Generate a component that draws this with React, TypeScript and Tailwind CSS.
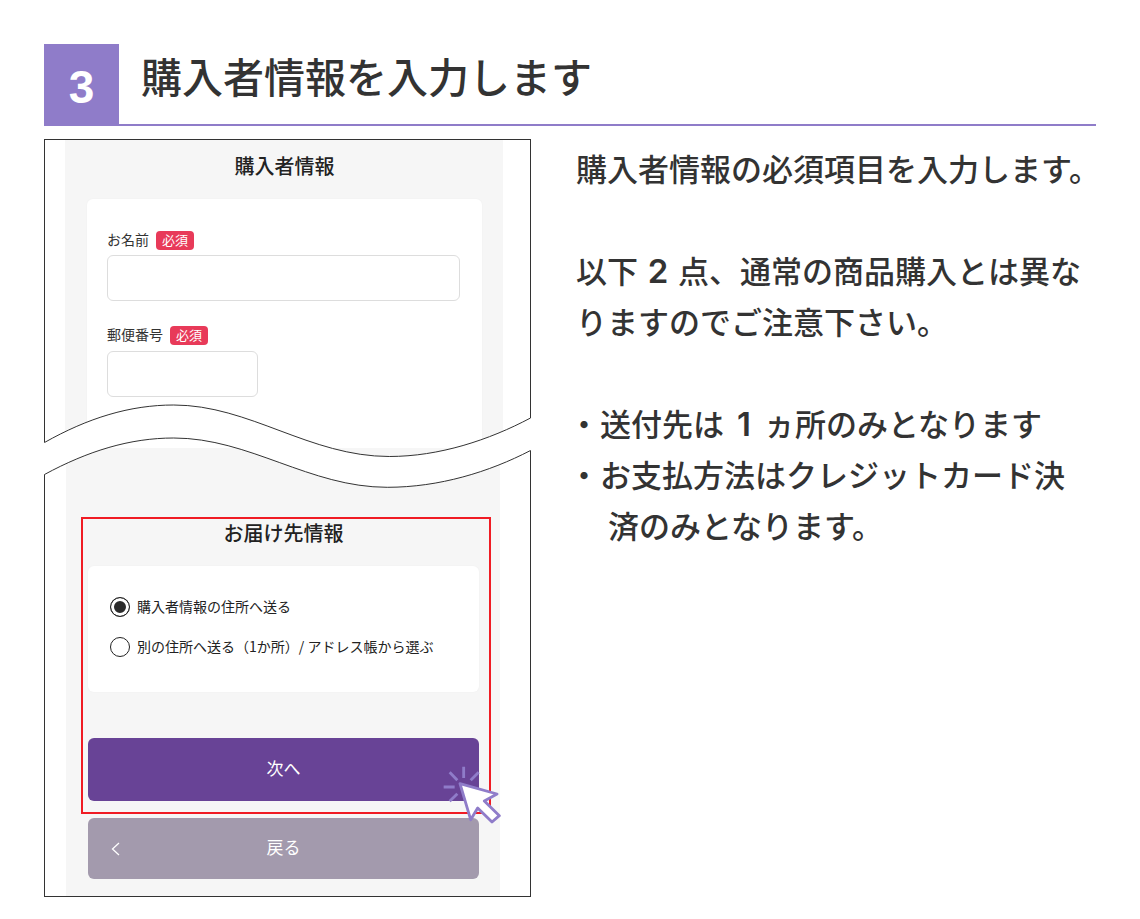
import { useState } from "react";
import type { ReactNode } from "react";

function RequiredLabel({ htmlFor, children }: { htmlFor: string; children: ReactNode }) {
  return (
    <label htmlFor={htmlFor} className="flex items-start gap-[7px] text-[14px] leading-[16px] text-[#333]">
      {children}
      <span className="rounded-[4px] bg-[#e83a59] px-[6px] pb-[2px] text-[13px] leading-[17px] text-white">必須</span>
    </label>
  );
}

function ShippingOption({
  value,
  selected,
  onSelect,
  children,
}: {
  value: string;
  selected: string;
  onSelect: (value: string) => void;
  children: ReactNode;
}) {
  return (
    <label className="flex items-center gap-[7px] text-[14px] leading-[18px] whitespace-nowrap text-[#222]">
      <input
        type="radio"
        name="shipping"
        value={value}
        checked={selected === value}
        onChange={() => onSelect(value)}
        className="size-[20px] shrink-0 appearance-none rounded-full border border-[#222] bg-white checked:bg-[#2b2b2b] checked:shadow-[inset_0_0_0_3px_#fff]"
      />
      <span className="pb-[2px]">{children}</span>
    </label>
  );
}

function TornWave() {
  return (
    <svg
      aria-hidden="true"
      viewBox="44 400 488 92"
      preserveAspectRatio="none"
      className="absolute top-[260px] -left-px h-[92px] w-[calc(100%+2px)]"
    >
      <path
        d="M43 442.5H44.5C88 418 130 405 174 405C250 405 310 456.5 390 456.5C440 456.5 490 440 531.5 418H533V450.5H531.5C490 472 440 487.3 388 487.3C310 487.3 250 438 174 438C130 438 88 451 44.5 474.5H43Z"
        fill="#fff"
      />
      <path
        d="M44.5 442.5C88 418 130 405 174 405C250 405 310 456.5 390 456.5C440 456.5 490 440 531.5 418M44.5 474.5C88 451 130 438 174 438C250 438 310 487.3 388 487.3C440 487.3 490 472 531.5 450.5"
        fill="none"
        stroke="#333"
        vectorEffect="non-scaling-stroke"
      />
    </svg>
  );
}

function ClickCursor() {
  return (
    <svg
      aria-hidden="true"
      viewBox="129 138 174 174"
      className="pointer-events-none absolute -right-[12px] -bottom-[12px] z-10 size-[58px]"
      stroke="#8f7cc9"
      strokeWidth="8.5"
      strokeLinejoin="round"
    >
      <path d="M191 140V174M149 157L172 181M131 201H164M236 157L212 181M172 221L149 244" fill="none" />
      <path d="M180 191L291 222L253 243L298 287L276 306L233 264L212 299Z" fill="#fff" />
    </svg>
  );
}

function Numeral({ children }: { children: ReactNode }) {
  return (
    <span className="mx-[9px] inline-block w-[22px] text-center font-['Inter','Liberation_Sans',sans-serif] text-[33px] leading-none font-semibold">
      {children}
    </span>
  );
}

function Bullet({ children }: { children: ReactNode }) {
  return (
    <li className="flex gap-[8px]">
      <span className="flex w-[16px] shrink-0 justify-center">・</span>
      <span>{children}</span>
    </li>
  );
}

export default function App() {
  const [shipping, setShipping] = useState("buyer");

  return (
    <main className="bg-white px-[44px] pt-[44px] pb-[22px] font-['Noto_Sans_CJK_JP',sans-serif] text-[#333]">
      <header className="flex border-b-2 border-[#8f7cc9]">
        <span className="flex h-[80px] w-[75px] items-center justify-center bg-[#8f7cc9] pt-[6px] font-['Liberation_Sans',sans-serif] text-[46px] font-bold text-white">
          3
        </span>
        <h1 className="pl-[22px] text-[41px] leading-[62px] font-medium whitespace-nowrap">購入者情報を入力します</h1>
      </header>

      <div className="mt-[13px] grid grid-cols-[minmax(0,487fr)_minmax(0,520fr)] items-start gap-[45px]">
        <form className="relative border border-[#333]" onSubmit={(event) => event.preventDefault()}>
          <section className="mr-[27px] ml-[20px] bg-[#f6f6f6] pr-[21px] pl-[22px]">
            <h2 className="pt-[12px] pb-[19px] text-center text-[20px] leading-[28px] font-medium text-[#222]">購入者情報</h2>
            <div className="rounded-t-[6px] bg-white pt-[32px] pr-[22px] pb-[51px] pl-[20px] shadow-[0_0_2px_#0000000a]">
              <RequiredLabel htmlFor="name">お名前</RequiredLabel>
              <input
                id="name"
                type="text"
                className="mt-[5px] block h-[46px] w-full rounded-[6px] border border-[#ddd] bg-white px-3 text-[14px]"
              />
              <div className="mt-[25px]">
                <RequiredLabel htmlFor="postal">郵便番号</RequiredLabel>
              </div>
              <input
                id="postal"
                type="text"
                className="mt-[6px] block h-[46px] w-[151px] rounded-[6px] border border-[#ddd] bg-white px-3 text-[14px]"
              />
            </div>
          </section>

          <section className="mr-[30px] ml-[21px] bg-[#f6f6f6] pt-[69px] pb-[17px]">
            <div className="relative mr-[9px] ml-[15px] border-2 border-[#f01c24] pr-[10px] pb-[11px] pl-[5px]">
              <h2 className="pb-[19px] text-center text-[20px] leading-[28px] font-medium text-[#222]">お届け先情報</h2>
              <div className="flex flex-col gap-[20px] rounded-[6px] bg-white pt-[31px] pb-[35px] pl-[22px] shadow-[0_0_2px_#0000000a]">
                <ShippingOption value="buyer" selected={shipping} onSelect={setShipping}>
                  購入者情報の住所へ送る
                </ShippingOption>
                <ShippingOption value="other" selected={shipping} onSelect={setShipping}>
                  別の住所へ送る（1か所）/ アドレス帳から選ぶ
                </ShippingOption>
              </div>
              <button type="submit" className="mt-[46px] block h-[63px] w-full rounded-[6px] bg-[#684396] pb-[3px] text-[17px] text-white">
                次へ
              </button>
              <ClickCursor />
            </div>
            <div className="mt-[4px] mr-[21px] ml-[22px]">
              <button
                type="button"
                className="grid h-[61px] w-full grid-cols-[1fr_auto_1fr] items-center rounded-[6px] bg-[#a39aad] px-[23px] text-[17px] text-white"
              >
                <svg aria-hidden="true" viewBox="0 0 9 14" className="h-[14px] w-[9px]" fill="none" stroke="currentColor" strokeWidth="1.3">
                  <path d="M8 1L1.5 7L8 13" />
                </svg>
                <span className="pb-[3px]">戻る</span>
              </button>
            </div>
          </section>
          <TornWave />
        </form>

        <div className="pt-[3px] text-[31px] leading-[51px] font-medium whitespace-nowrap">
          <p>購入者情報の必須項目を入力します。</p>
          <p className="mt-[51px]">
            以下<Numeral>2</Numeral>点、通常の商品購入とは異な
            <br />
            りますのでご注意下さい。
          </p>
          <ul className="mt-[51px]">
            <Bullet>
              送付先は<Numeral>1</Numeral>ヵ所のみとなります
            </Bullet>
            <Bullet>
              お支払方法はクレジットカード決
              <br />
              <span className="pl-[8px]">済のみとなります。</span>
            </Bullet>
          </ul>
        </div>
      </div>
    </main>
  );
}
